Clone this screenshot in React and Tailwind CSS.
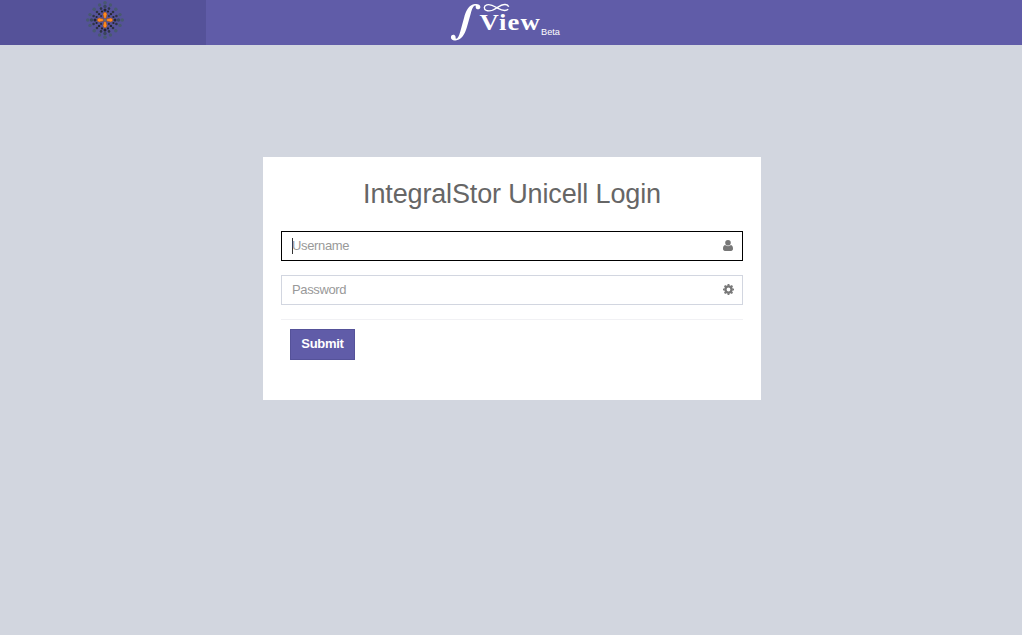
function UserIcon() {
  return (
    <svg width="10" height="11" viewBox="0 0 10 11" fill="#777" aria-hidden="true" className="-mt-px">
      <circle cx="5" cy="2.8" r="2.8" />
      <path d="M2 5.1C.7 5.4 0 6.8 0 8.8C0 10.1 .8 11 1.9 11H8.1C9.2 11 10 10.1 10 8.8C10 6.8 9.3 5.4 8 5.1C6.5 6.5 3.5 6.5 2 5.1Z" />
    </svg>
  );
}

function CogIcon() {
  return (
    <svg width="11" height="11" viewBox="-5.5 -5.5 11 11" aria-hidden="true" className="-mt-px -mr-px">
      <circle r="3.05" fill="none" stroke="#777" strokeWidth="2.3" />
      {[0, 45, 90, 135, 180, 225, 270, 315].map((a) => (
        <path key={a} transform={`rotate(${a})`} d="M-1.15-3.8L-.85-5.5H.85L1.15-3.8Z" fill="#777" />
      ))}
    </svg>
  );
}

const beads = [
  [17.2, 0, 1.8, "#48596f"],
  [13.5, 0, 1.7, "#3b475c"],
  [10, 0, 1.5, "#25262f"],
  [15, 5.4, 1.7, "#48596f"],
  [11.4, 4, 1.3, "#2f3444"],
  [8.4, 3, 1.1, "#25262f"],
  [10.8, 10.8, 1.8, "#48596f"],
  [8, 8, 1.3, "#2f3444"],
  [5.9, 5.9, 1.2, "#25262f"],
  [3.9, 3.9, 1.1, "#302f40"],
  [5.4, 15, 1.7, "#48596f"],
  [4, 11.4, 1.3, "#2f3444"],
  [3, 8.4, 1.1, "#25262f"],
];

function Emblem() {
  return (
    <svg width="38" height="38" viewBox="-19 -19 38 38" aria-hidden="true">
      {[0, 90, 180, 270].map((a) => (
        <g key={a} transform={`rotate(${a})`}>
          {beads.map(([x, y, r, fill]) => (
            <circle key={`${x},${y}`} cx={x} cy={y} r={r} fill={fill} />
          ))}
        </g>
      ))}
      {[0, 90, 180, 270].map((a) => (
        <path
          key={a}
          transform={`rotate(${a})`}
          d="M-.9-1.5L-2-5.8Q-1.6-7.9 0-7.9Q1.6-7.9 2-5.8L.9-1.5Z"
          fill="#ff8a1e"
          stroke="#8a4522"
          strokeWidth=".5"
        />
      ))}
      <circle r="1.6" fill="#62677a" />
    </svg>
  );
}

function Logo() {
  return (
    <svg width="112" height="45" viewBox="450 0 112 45" role="img" aria-label="View Beta">
      <path
        d="M480.4 7C480.4 4.5 477.6 3.6 474.8 4C469 4.8 465.9 10.4 464 18L460.3 31.5C459 36 457.8 38.6 456.2 38.8C455.2 38.8 455.9 37.6 455.5 36.5C454.8 34.1 451.2 34.4 450.9 37.1C450.7 39.7 453 40.7 455.5 40.4C461.4 39.9 464.7 34.7 466.8 27.5L470.7 13.7C472 8.9 473.2 5.5 475.2 5.4C476.2 5.4 475.5 6.5 475.8 7.8C476.5 10.2 480.4 9.7 480.4 7Z"
        fill="#fff"
      />
      <path
        d="M497 7.7C493 10.5 489.2 11.6 486.3 10.4C483.6 9.2 483.6 6 486.8 4.9C490.8 3.5 494.2 6.2 497.5 8.1C501.3 10.2 506 11.3 508.2 9.2M497 7.7C499.5 6 502 4.3 505.2 4.5Q508 4.8 508.7 6.8"
        fill="none"
        stroke="#fff"
        strokeWidth="1.4"
      />
      <text
        transform="translate(479.5 29.7) scale(1.16 1)"
        fill="#fff"
        fontSize="23"
        fontWeight="700"
        letterSpacing="1"
        className="font-['Liberation_Serif',serif]"
      >
        View
      </text>
      <text x="541" y="35" fill="#fff" fontSize="9.2" className="font-['Liberation_Sans',sans-serif]">
        Beta
      </text>
    </svg>
  );
}

function Field({ placeholder, icon, active }) {
  return (
    <label
      className={`flex h-[30px] items-center border pl-[10px] pr-[9px] ${
        active ? "border-black" : "border-[#d2d6e0]"
      }`}
    >
      {active && <span className="-mr-px h-4 w-px bg-[#333]" />}
      <input
        type={placeholder === "Password" ? "password" : "text"}
        placeholder={placeholder}
        className="min-w-0 flex-1 bg-transparent text-[13px] leading-5 tracking-[-0.36px] outline-none placeholder:text-[#999]"
      />
      {icon}
    </label>
  );
}

export default function App() {
  return (
    <div className="flex h-screen flex-col bg-[#d2d6df] font-['Liberation_Sans',Arial,sans-serif]">
      <header className="flex h-[45px] shrink-0 bg-[#605ca8]">
        <div className="flex w-[206px] justify-center bg-[#555299] pt-px pl-[3px]">
          <Emblem />
        </div>
        <div className="flex flex-1 pl-[244px]">
          <Logo />
        </div>
      </header>
      <main className="mt-[112px] ml-[263px] h-[243px] w-[498px] bg-white px-[18px] pt-[18px]">
        <h1 className="text-center text-[27px] leading-[38px] tracking-[-0.15px] text-[#666]">
          IntegralStor Unicell Login
        </h1>
        <form className="mt-[18px]">
          <Field placeholder="Username" active icon={<UserIcon />} />
          <div className="h-[14px]" />
          <Field placeholder="Password" icon={<CogIcon />} />
          <div className="mt-[14px] border-t border-[#f1f1f4] pt-[9px] pl-[9px]">
            <button
              type="button"
              className="block h-[31px] w-[65px] border border-[#555299] bg-[#605ca8] pb-[2px] text-[13px] leading-[27px] font-bold tracking-[-0.3px] text-white"
            >
              Submit
            </button>
          </div>
        </form>
      </main>
    </div>
  );
}
